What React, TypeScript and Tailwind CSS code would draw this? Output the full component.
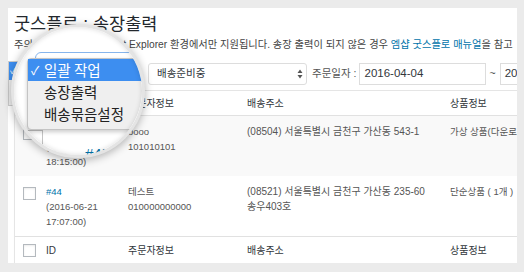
import React from "react";

function Checkbox() {
  return (
    <div className="w-[13px] h-[13px] border border-[#b4b9be] bg-white shadow-[inset_0_1px_2px_rgba(0,0,0,0.08)]" />
  );
}

function UpDown() {
  return (
    <svg width="6" height="10" viewBox="0 0 6 10">
      <path d="M0.5 4 L3 0.5 L5.5 4 Z M0.5 6 L3 9.5 L5.5 6 Z" fill="#555" />
    </svg>
  );
}

function HeadRow({ top }: { top?: boolean }) {
  return (
    <div
      className={
        top
          ? "grid grid-cols-[31px_82px_119px_203px_1fr] h-[25px] items-center border-b border-[#e1e1e1] text-[10px] text-[#32373c] whitespace-nowrap"
          : "grid grid-cols-[31px_82px_119px_203px_1fr] h-[27px] items-center border-t border-[#e1e1e1] text-[10px] text-[#32373c] whitespace-nowrap"
      }
    >
      <div className="pl-[8px]">
        <Checkbox />
      </div>
      <div>ID</div>
      <div>주문자정보</div>
      <div>배송주소</div>
      <div>상품정보</div>
    </div>
  );
}

export default function App() {
  return (
    <div className="relative w-[524px] h-[272px] overflow-hidden bg-[#ebebeb] font-['Liberation_Sans','Noto_Sans_CJK_KR',sans-serif] pt-[8px] pl-[8px] pr-[7px] pb-[9px]">
      <div className="relative w-full h-full bg-white overflow-hidden">
        <div className="pl-[6px] pt-[6px]">
          <h1 className="text-[17.5px] leading-[20px] text-[#23282d] whitespace-nowrap">
            굿스플로 : 송장출력
          </h1>
          <p className="mt-[4px] text-[10.25px] leading-[14px] text-[#444] whitespace-nowrap">
            주의: 송장 출력은 Internet Explorer 환경에서만 지원됩니다. 송장 출력이 되지 않은 경우{" "}
            <span className="text-[#0073aa]">엠샵 굿스플로 매뉴얼</span>을 참고
          </p>

          {/* toolbar */}
          <div className="mt-[11px] h-[22px] flex items-center whitespace-nowrap text-[10.5px]">
            <div className="w-[126px] h-[22px] border border-[#ddd] rounded-[3px] flex items-center pl-[8px] text-[#32373c] shrink-0">
              일괄 작업
            </div>
            <div className="ml-[8px] w-[159px] h-[22px] border border-[#ddd] rounded-[3px] flex items-center justify-between pl-[8px] pr-[3px] text-[#32373c] shrink-0">
              <span>배송준비중</span>
              <UpDown />
            </div>
            <span className="ml-[5px] text-[#555] shrink-0">주문일자 :</span>
            <div className="ml-[3px] w-[127px] h-[22px] border border-[#ddd] flex items-center pl-[4px] text-[11.5px] text-[#32373c] shrink-0">
              2016-04-04
            </div>
            <span className="ml-[3px] text-[#555] shrink-0">~</span>
            <div className="ml-[4px] w-[127px] h-[22px] border border-[#ddd] flex items-center pl-[4px] text-[11.5px] text-[#32373c] shrink-0">
              2016-04-28
            </div>
          </div>

          {/* table */}
          <div className="mt-[5px] w-[520px] border border-[#e5e5e5] shadow-[0_1px_1px_rgba(0,0,0,0.04)] text-[#555]">
            <HeadRow top />

            <div className="grid grid-cols-[31px_82px_119px_203px_1fr] h-[60px] pt-[8px] bg-[#f9f9f9] text-[9.5px] leading-[15px] whitespace-nowrap">
              <div className="pl-[8px] pt-[3px]">
                <Checkbox />
              </div>
              <div>
                <div className="text-[#0073aa]">#45</div>
                <div>(2016-06-22</div>
                <div>18:15:00)</div>
              </div>
              <div>
                <div>oooo</div>
                <div>101010101</div>
              </div>
              <div className="text-[10px]">(08504) 서울특별시 금천구 가산동 543-1</div>
              <div>가상 상품(다운로드 상품) ( 1개 )</div>
            </div>

            <div className="grid grid-cols-[31px_82px_119px_203px_1fr] h-[60px] pt-[8px] bg-white text-[9.5px] leading-[15px] whitespace-nowrap">
              <div className="pl-[8px] pt-[3px]">
                <Checkbox />
              </div>
              <div>
                <div className="text-[#0073aa]">#44</div>
                <div>(2016-06-21</div>
                <div>17:07:00)</div>
              </div>
              <div>
                <div>테스트</div>
                <div>010000000000</div>
              </div>
              <div className="text-[10px]">
                <div>(08521) 서울특별시 금천구 가산동 235-60</div>
                <div>송우403호</div>
              </div>
              <div>단순상품 ( 1개 )</div>
            </div>

            <HeadRow />
          </div>
        </div>
      </div>

      {/* real (unmagnified) dropdown peeking out */}
      <div className="absolute left-[8px] top-[61px] w-[100px] h-[45px] bg-[#f0f0f0] border border-[#ccc]">
        <div className="h-[18px] bg-[#3d8ef0] text-white text-[10px] leading-[18px] pl-[1px]">✓</div>
      </div>

      {/* magnifier */}
      <div className="absolute left-[11px] top-[24px] w-[134px] h-[134px] rounded-full border-[3px] border-[#e4e4e4] bg-white overflow-hidden shadow-[0_2px_8px_rgba(0,0,0,0.3)]">
        <div className="absolute left-[21px] top-[25px] w-[150px] h-[30px] border-[1.5px] border-[#86b5ec] rounded-[6px]" />
        <div className="absolute left-[9px] top-[103px] w-[20px] h-[20px] border-[1.5px] border-[#c4c4c4] bg-white" />
        <div className="absolute left-[71px] top-[117px] text-[15px] leading-[20px] text-[#0073aa]">#45</div>
        <div className="absolute left-[13px] top-[31px] w-[160px] h-[72px] bg-[#efefef] border border-[#c4c4c4] rounded-[4px] shadow-[0_2px_4px_rgba(0,0,0,0.2)] font-['Noto_Sans_CJK_KR',sans-serif] text-[14.5px] leading-[22px] whitespace-nowrap">
          <div className="h-[22px] bg-[#3d8ef0] text-white flex items-center pl-[3px]">
            <span className="w-[13px] text-[12px]">✓</span>
            <span>일괄 작업</span>
          </div>
          <div className="h-[22px] text-[#222] flex items-center pl-[16px]">송장출력</div>
          <div className="h-[22px] text-[#222] flex items-center pl-[16px]">배송묶음설정</div>
        </div>
        <div className="absolute inset-0 rounded-full shadow-[inset_0_0_5px_rgba(0,0,0,0.15)]" />
      </div>
    </div>
  );
}
